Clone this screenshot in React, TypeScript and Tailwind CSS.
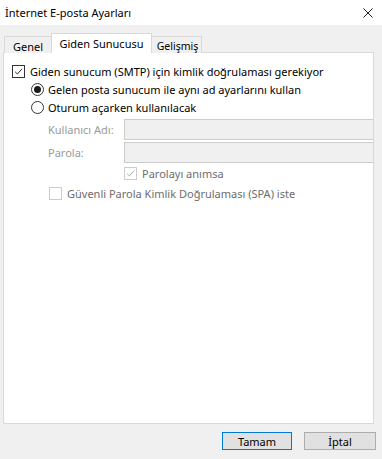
import React from "react";

const Check = ({ color = "#1a1a1a" }: { color?: string }) => (
   <svg width="13" height="13" viewBox="0 0 13 13">
      <path d="M2.5 6.8 L5.2 9.4 L10.6 3.4" fill="none" stroke={color} strokeWidth="1.1" />
   </svg>
);

const Checkbox = ({
   checked,
   disabled,
}: {
   checked?: boolean;
   disabled?: boolean;
}) => (
   <span
      className={`flex h-[13px] w-[13px] shrink-0 items-center justify-center border bg-white ${
         disabled ? "border-[#cccccc]" : "border-[#333333]"
      }`}
   >
      {checked && <Check color={disabled ? "#a8a8a8" : "#1a1a1a"} />}
   </span>
);

const Radio = ({ checked }: { checked?: boolean }) => (
   <span className="flex h-[13px] w-[13px] shrink-0 items-center justify-center rounded-full border border-[#333333] bg-white">
      {checked && <span className="h-[7px] w-[7px] rounded-full bg-[#1a1a1a]" />}
   </span>
);

export default function App() {
   return (
      <div className="flex h-[459px] w-[382px] flex-col bg-[#f0f0f0] font-['Noto_Sans',sans-serif] text-[11px] leading-none text-[#000000]">
         <div className="flex h-[25px] shrink-0 items-center justify-between bg-white pl-[5px] pr-[9px]">
            <span className="pb-[1px]">İnternet E-posta Ayarları</span>
            <svg width="10" height="10" viewBox="0 0 10 10">
               <path d="M0.5 0.5 L9.5 9.5 M9.5 0.5 L0.5 9.5" stroke="#1a1a1a" strokeWidth="1" />
            </svg>
         </div>

         <div className="flex flex-1 flex-col pl-[3px] pr-[8px] pt-[8px]">
            <div className="relative z-10 -mb-[1px] flex items-end pl-[1px]">
               <div className="flex h-[17px] w-[48px] items-center justify-center border border-b-0 border-[#d9d9d9] bg-[#f0f0f0] pt-[2px]">
                  Genel
               </div>
               <div className="relative z-10 -mx-[1px] flex h-[20px] w-[101px] items-center justify-center border border-b-0 border-[#d9d9d9] bg-white pb-[1px]">
                  Giden Sunucusu
               </div>
               <div className="flex h-[17px] w-[51px] items-center justify-center border border-b-0 border-[#d9d9d9] bg-[#f0f0f0] pl-[2px] pt-[2px] text-[10.5px]">
                  Gelişmiş
               </div>
            </div>

            <div className="flex h-[372px] flex-col overflow-hidden border border-[#d9d9d9] bg-white pl-[8px] pt-[12px]">
               <div className="flex h-[13px] items-center gap-[5px]">
                  <Checkbox checked />
                  <span>Giden sunucum (SMTP) için kimlik doğrulaması gerekiyor</span>
               </div>

               <div className="mt-[5px] flex h-[13px] items-center gap-[4px] pl-[19px]">
                  <Radio checked />
                  <span>Gelen posta sunucum ile aynı ad ayarlarını kullan</span>
               </div>

               <div className="mt-[5px] flex h-[13px] items-center gap-[4px] pl-[19px]">
                  <Radio />
                  <span>Oturum açarken kullanılacak</span>
               </div>

               <div className="mt-[5px] flex items-center pl-[36px]">
                  <span className="w-[76px] shrink-0 whitespace-nowrap text-[#9a9a9a]">Kullanıcı Adı:</span>
                  <div className="h-[21px] w-[270px] shrink-0 border border-[#cccccc] bg-[#f0f0f0]" />
               </div>

               <div className="mt-[2px] flex items-center pl-[36px]">
                  <span className="w-[76px] shrink-0 whitespace-nowrap text-[#9a9a9a]">Parola:</span>
                  <div className="h-[21px] w-[270px] shrink-0 border border-[#cccccc] bg-[#f0f0f0]" />
               </div>

               <div className="mt-[4px] flex h-[13px] items-center gap-[5px] pl-[112px]">
                  <Checkbox checked disabled />
                  <span className="text-[#6d6d6d]">Parolayı anımsa</span>
               </div>

               <div className="mt-[7px] flex h-[13px] items-center gap-[5px] pl-[37px]">
                  <Checkbox disabled />
                  <span className="text-[#6d6d6d]">Güvenli Parola Kimlik Doğrulaması (SPA) iste</span>
               </div>
            </div>

            <div className="mt-[8px] flex justify-end gap-[12px]">
               <button className="flex h-[18px] w-[70px] items-center justify-center border border-[#0078d7] bg-[#e1e1e1]">
                  Tamam
               </button>
               <button className="-mr-[2px] flex h-[18px] w-[72px] items-center justify-center border border-[#adadad] bg-[#e1e1e1]">
                  İptal
               </button>
            </div>
         </div>
      </div>
   );
}
